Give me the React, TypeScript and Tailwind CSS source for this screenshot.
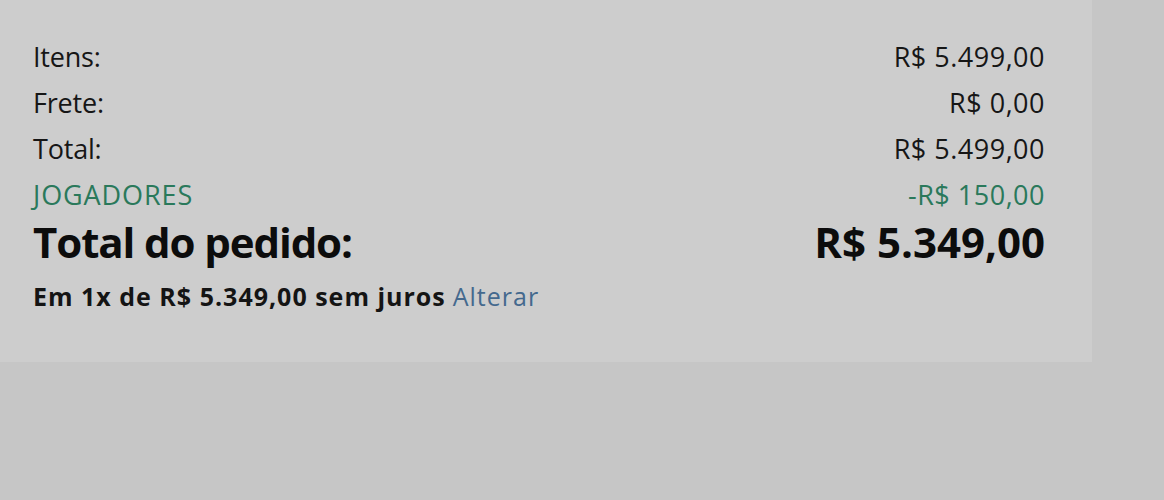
import React from 'react'

// Order summary box shown at checkout: line items, coupon, grand total.
type Line = { label: string; value: string; tone?: 'promo' }

const LINES: Line[] = [
  { label: 'Itens:', value: 'R$ 5.499,00' },
  { label: 'Frete:', value: 'R$ 0,00' },
  { label: 'Total:', value: 'R$ 5.499,00' },
  { label: 'JOGADORES', value: '-R$ 150,00', tone: 'promo' },
]

const SummaryRow: React.FC<{ line: Line }> = ({ line }) => {
  const promo = line.tone === 'promo'
  return (
    <div
      className={`flex items-center justify-between h-[46px] text-[27px] ${
        promo ? 'text-[#2a795b]' : 'text-[#161616]'
      }`}
    >
      <span className={promo ? 'tracking-[0.9px]' : 'tracking-[-0.2px]'}>{line.label}</span>
      <span className="tracking-[0.5px]">{line.value}</span>
    </div>
  )
}

export default function App() {
  return (
    <div
      className="w-[1164px] h-[500px] bg-[#c6c6c6]"
      style={{ fontFamily: '"Open Sans", "Noto Sans", sans-serif' }}
    >
      <div className="w-[1092px] h-[362px] bg-[#cdcdcd] pl-[33px] pr-[47px] pt-[34px]">
        {LINES.map((l) => (
          <SummaryRow key={l.label} line={l} />
        ))}
        <div className="flex items-center justify-between h-[46px] font-bold text-[42px] text-[#0c0c0c]">
          <span className="tracking-[-1.1px]">Total do pedido:</span>
          <span>R$ 5.349,00</span>
        </div>
        <div className="flex items-center h-[66px] text-[25px] font-bold text-[#141414] tracking-[1px]">
          Em 1x de R$ 5.349,00 sem juros
          <a className="ml-[7px] font-normal text-[#44698e] tracking-[1px]">Alterar</a>
        </div>
      </div>
    </div>
  )
}
